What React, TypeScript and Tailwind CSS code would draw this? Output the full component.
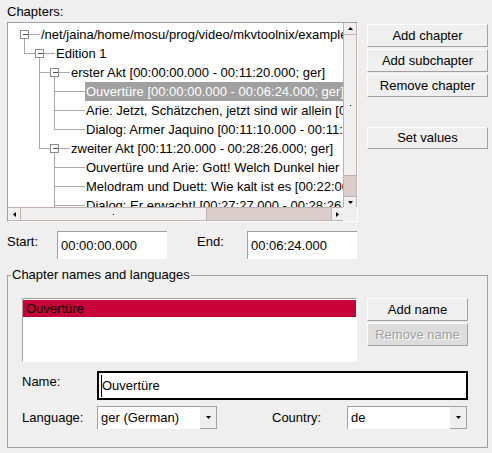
import React from 'react';
import clsx from 'clsx';

type TreeRow = { level: number; text: string; box?: boolean; selected?: boolean };

const ROWS: TreeRow[] = [
  { level: 0, text: '/net/jaina/home/mosu/prog/video/mkvtoolnix/examples/example-chapters-2.xml', box: true },
  { level: 1, text: 'Edition 1', box: true },
  { level: 2, text: 'erster Akt [00:00:00.000 - 00:11:20.000; ger]', box: true },
  { level: 3, text: 'Ouvertüre [00:00:00.000 - 00:06:24.000; ger]', selected: true },
  { level: 3, text: 'Arie: Jetzt, Schätzchen, jetzt sind wir allein [00:06:24.000 - 00:11:10.000; ger]' },
  { level: 3, text: 'Dialog: Armer Jaquino [00:11:10.000 - 00:11:20.000; ger]' },
  { level: 2, text: 'zweiter Akt [00:11:20.000 - 00:28:26.000; ger]', box: true },
  { level: 3, text: 'Ouvertüre und Arie: Gott! Welch Dunkel hier [00:11:20.000 - 00:17:00.000; ger]' },
  { level: 3, text: 'Melodram und Duett: Wie kalt ist es [00:22:00.000 - 00:27:27.000; ger]' },
  { level: 3, text: 'Dialog: Er erwacht! [00:27:27.000 - 00:28:26.000; ger]' },
];

const INDENT = ['pl-[32px]', 'pl-[47px]', 'pl-[62px]', 'pl-[77px]'];

// vertical connector lines: x, y1, y2 (viewport coords)
const VLINES: [number, number, number][] = [
  [16.5, 15.5, 30.5],
  [31.5, 34.5, 125.5],
  [46.5, 53.5, 106.5],
  [46.5, 129.5, 200],
];

const Arrow = ({ dir }: { dir: 'up' | 'down' | 'left' | 'right' }) => {
  if (dir === 'up' || dir === 'down') {
    return (
      <svg width="5" height="3" viewBox="0 0 5 3">
        <polygon points={dir === 'up' ? '0,3 2.5,0 5,3' : '0,0 5,0 2.5,3'} fill="#000" />
      </svg>
    );
  }
  return (
    <svg width="3" height="5" viewBox="0 0 3 5">
      <polygon points={dir === 'left' ? '3,0 3,5 0,2.5' : '0,0 3,2.5 0,5'} fill="#000" />
    </svg>
  );
};

const TreeLines = () => (
  <svg className="absolute left-0 top-0" width="335" height="184" shapeRendering="crispEdges">
    {VLINES.map(([x, y1, y2], i) => (
      <line key={`v${i}`} x1={x} y1={y1} x2={x} y2={y2} stroke="#a8a8a8" />
    ))}
    {ROWS.map((r, i) => {
      const cx = 16.5 + 15 * r.level;
      const cy = 11.5 + 19 * i;
      return (
        <g key={i}>
          {r.level > 0 && (
            <line x1={cx - 15} y1={cy} x2={r.box ? cx - 4 : cx + 15} y2={cy} stroke="#a8a8a8" />
          )}
          {r.box && (
            <>
              <line x1={cx + 4} y1={cy} x2={cx + 15} y2={cy} stroke="#a8a8a8" />
              <rect x={cx - 4} y={cy - 4} width="8" height="8" fill="#fff" stroke="#8c8c8c" />
              <line x1={cx - 2} y1={cy} x2={cx + 3} y2={cy} stroke="#505050" />
            </>
          )}
        </g>
      );
    })}
  </svg>
);

const ScrollBtn = ({ dir, className }: { dir: 'up' | 'down' | 'left' | 'right'; className?: string }) => (
  <div className={clsx('flex items-center justify-center bg-[#efefef] border-[#c4b0b0]', className)}>
    <Arrow dir={dir} />
  </div>
);

const ChapterTree = () => (
  <div className="w-[351px] h-[200px] flex flex-col border border-t-[#a0a0a0] border-l-[#a0a0a0] border-b-white border-r-white">
    <div className="flex">
      <div className="relative w-[335px] h-[184px] overflow-hidden bg-white pt-[2px]">
        <TreeLines />
        {ROWS.map((r, i) => (
          <div key={i} className={clsx('relative h-[19px] flex whitespace-nowrap', INDENT[r.level])}>
            <span className={clsx('flex items-center pl-[1px] pr-[2px]', r.selected && 'bg-[#a0a0a0] text-white')}>
              {r.text}
            </span>
          </div>
        ))}
      </div>
      <div className="w-[14px] h-[184px] flex flex-col border-x border-[#c4b0b0] bg-[#dccdcd]">
        <ScrollBtn dir="up" className="h-[12px] border-b" />
        <div className="h-[141px] bg-[#efefef] border-b border-[#c4b0b0] flex items-center justify-center">
          <div className="w-[1px] h-[1px] bg-black" />
        </div>
        <div className="flex-1" />
        <ScrollBtn dir="down" className="h-[11px] border-t" />
      </div>
    </div>
    <div className="flex">
      <div className="w-[335px] h-[14px] flex border-y border-[#c4b0b0] bg-[#dccdcd]">
        <ScrollBtn dir="left" className="w-[13px] border-r" />
        <div className="w-[186px] bg-[#efefef] border-r border-[#c4b0b0] flex items-center justify-center">
          <div className="w-[1px] h-[1px] bg-black" />
        </div>
        <div className="flex-1" />
        <ScrollBtn dir="right" className="w-[12px] border-l" />
      </div>
      <div className="w-[14px] h-[14px] bg-[#efefef]" />
    </div>
  </div>
);

const Button = ({ children, disabled, className }: { children: React.ReactNode; disabled?: boolean; className?: string }) => (
  <div
    className={clsx(
      'flex items-center justify-center border border-t-white border-l-white border-b-[#a0a0a0] border-r-[#a0a0a0]',
      disabled ? 'bg-[#dddddd] text-[#a0a0a0] [text-shadow:1px_1px_0_#ffffff]' : 'bg-[#efefef]',
      className,
    )}
  >
    {children}
  </div>
);

const Field = ({ children }: { children: React.ReactNode }) => (
  <div className="w-[110px] h-[28px] bg-white border-t border-l border-[#a0a0a0] flex items-center pl-[3px]">
    {children}
  </div>
);

const Combo = ({ value }: { value: string }) => (
  <div className="w-[120px] h-[23px] flex border-t border-l border-[#a0a0a0] bg-white">
    <div className="flex-1 flex items-center pl-[3px]">{value}</div>
    <div className="w-[17px] bg-[#efefef] border-r border-b border-[#a0a0a0] flex items-center justify-center">
      <Arrow dir="down" />
    </div>
  </div>
);

export default function App() {
  return (
    <div className="w-[492px] h-[453px] overflow-hidden bg-[#efefef] pl-[7px] pt-[4px] text-[13px] leading-[16px] text-black font-['Liberation_Sans',Arial,sans-serif]">
      <div className="h-[18px]">Chapters:</div>

      <div className="flex gap-[9px]">
        <ChapterTree />
        <div className="w-[121px] flex flex-col pt-[2px]">
          <Button className="h-[23px]">Add chapter</Button>
          <Button className="h-[23px] mt-[2px]">Add subchapter</Button>
          <Button className="h-[23px] mt-[2px]">Remove chapter</Button>
          <Button className="h-[22px] mt-[30px]">Set values</Button>
        </div>
      </div>

      <div className="flex items-start mt-[9px] h-[28px]">
        <div className="w-[50px] pt-[3px]">Start:</div>
        <Field>00:00:00.000</Field>
        <div className="w-[50px] pt-[3px] ml-[30px]">End:</div>
        <Field>00:06:24.000</Field>
      </div>

      <div className="relative mt-[16px] w-[481px] h-[173px] border border-[#a0a0a0] pl-[14px] pt-[22px]">
        <span className="absolute left-[3px] top-[-9px] bg-[#efefef] px-[1px]">Chapter names and languages</span>

        <div className="flex gap-[10px]">
          <div className="w-[335px] h-[64px] bg-white border border-t-[#a0a0a0] border-l-[#a0a0a0] border-b-white border-r-white pt-[1px]">
            <div className="h-[17px] bg-[#c80038] text-black flex items-center pl-[3px]">Ouvertüre</div>
          </div>
          <div className="w-[101px] flex flex-col">
            <Button className="h-[23px]">Add name</Button>
            <Button disabled className="h-[23px] mt-[2px]">Remove name</Button>
          </div>
        </div>

        <div className="flex items-start mt-[9px]">
          <div className="w-[75px] pt-[3px]">Name:</div>
          <div className="w-[371px] h-[29px] bg-white border-2 border-black flex items-center pl-[2px]">
            <span className="w-[1px] h-[22px] bg-black" />
            <span>Ouvertüre</span>
          </div>
        </div>

        <div className="flex items-center mt-[6px]">
          <div className="w-[75px]">Language:</div>
          <Combo value="ger (German)" />
          <div className="w-[75px] ml-[55px]">Country:</div>
          <Combo value="de" />
        </div>
      </div>
    </div>
  );
}
